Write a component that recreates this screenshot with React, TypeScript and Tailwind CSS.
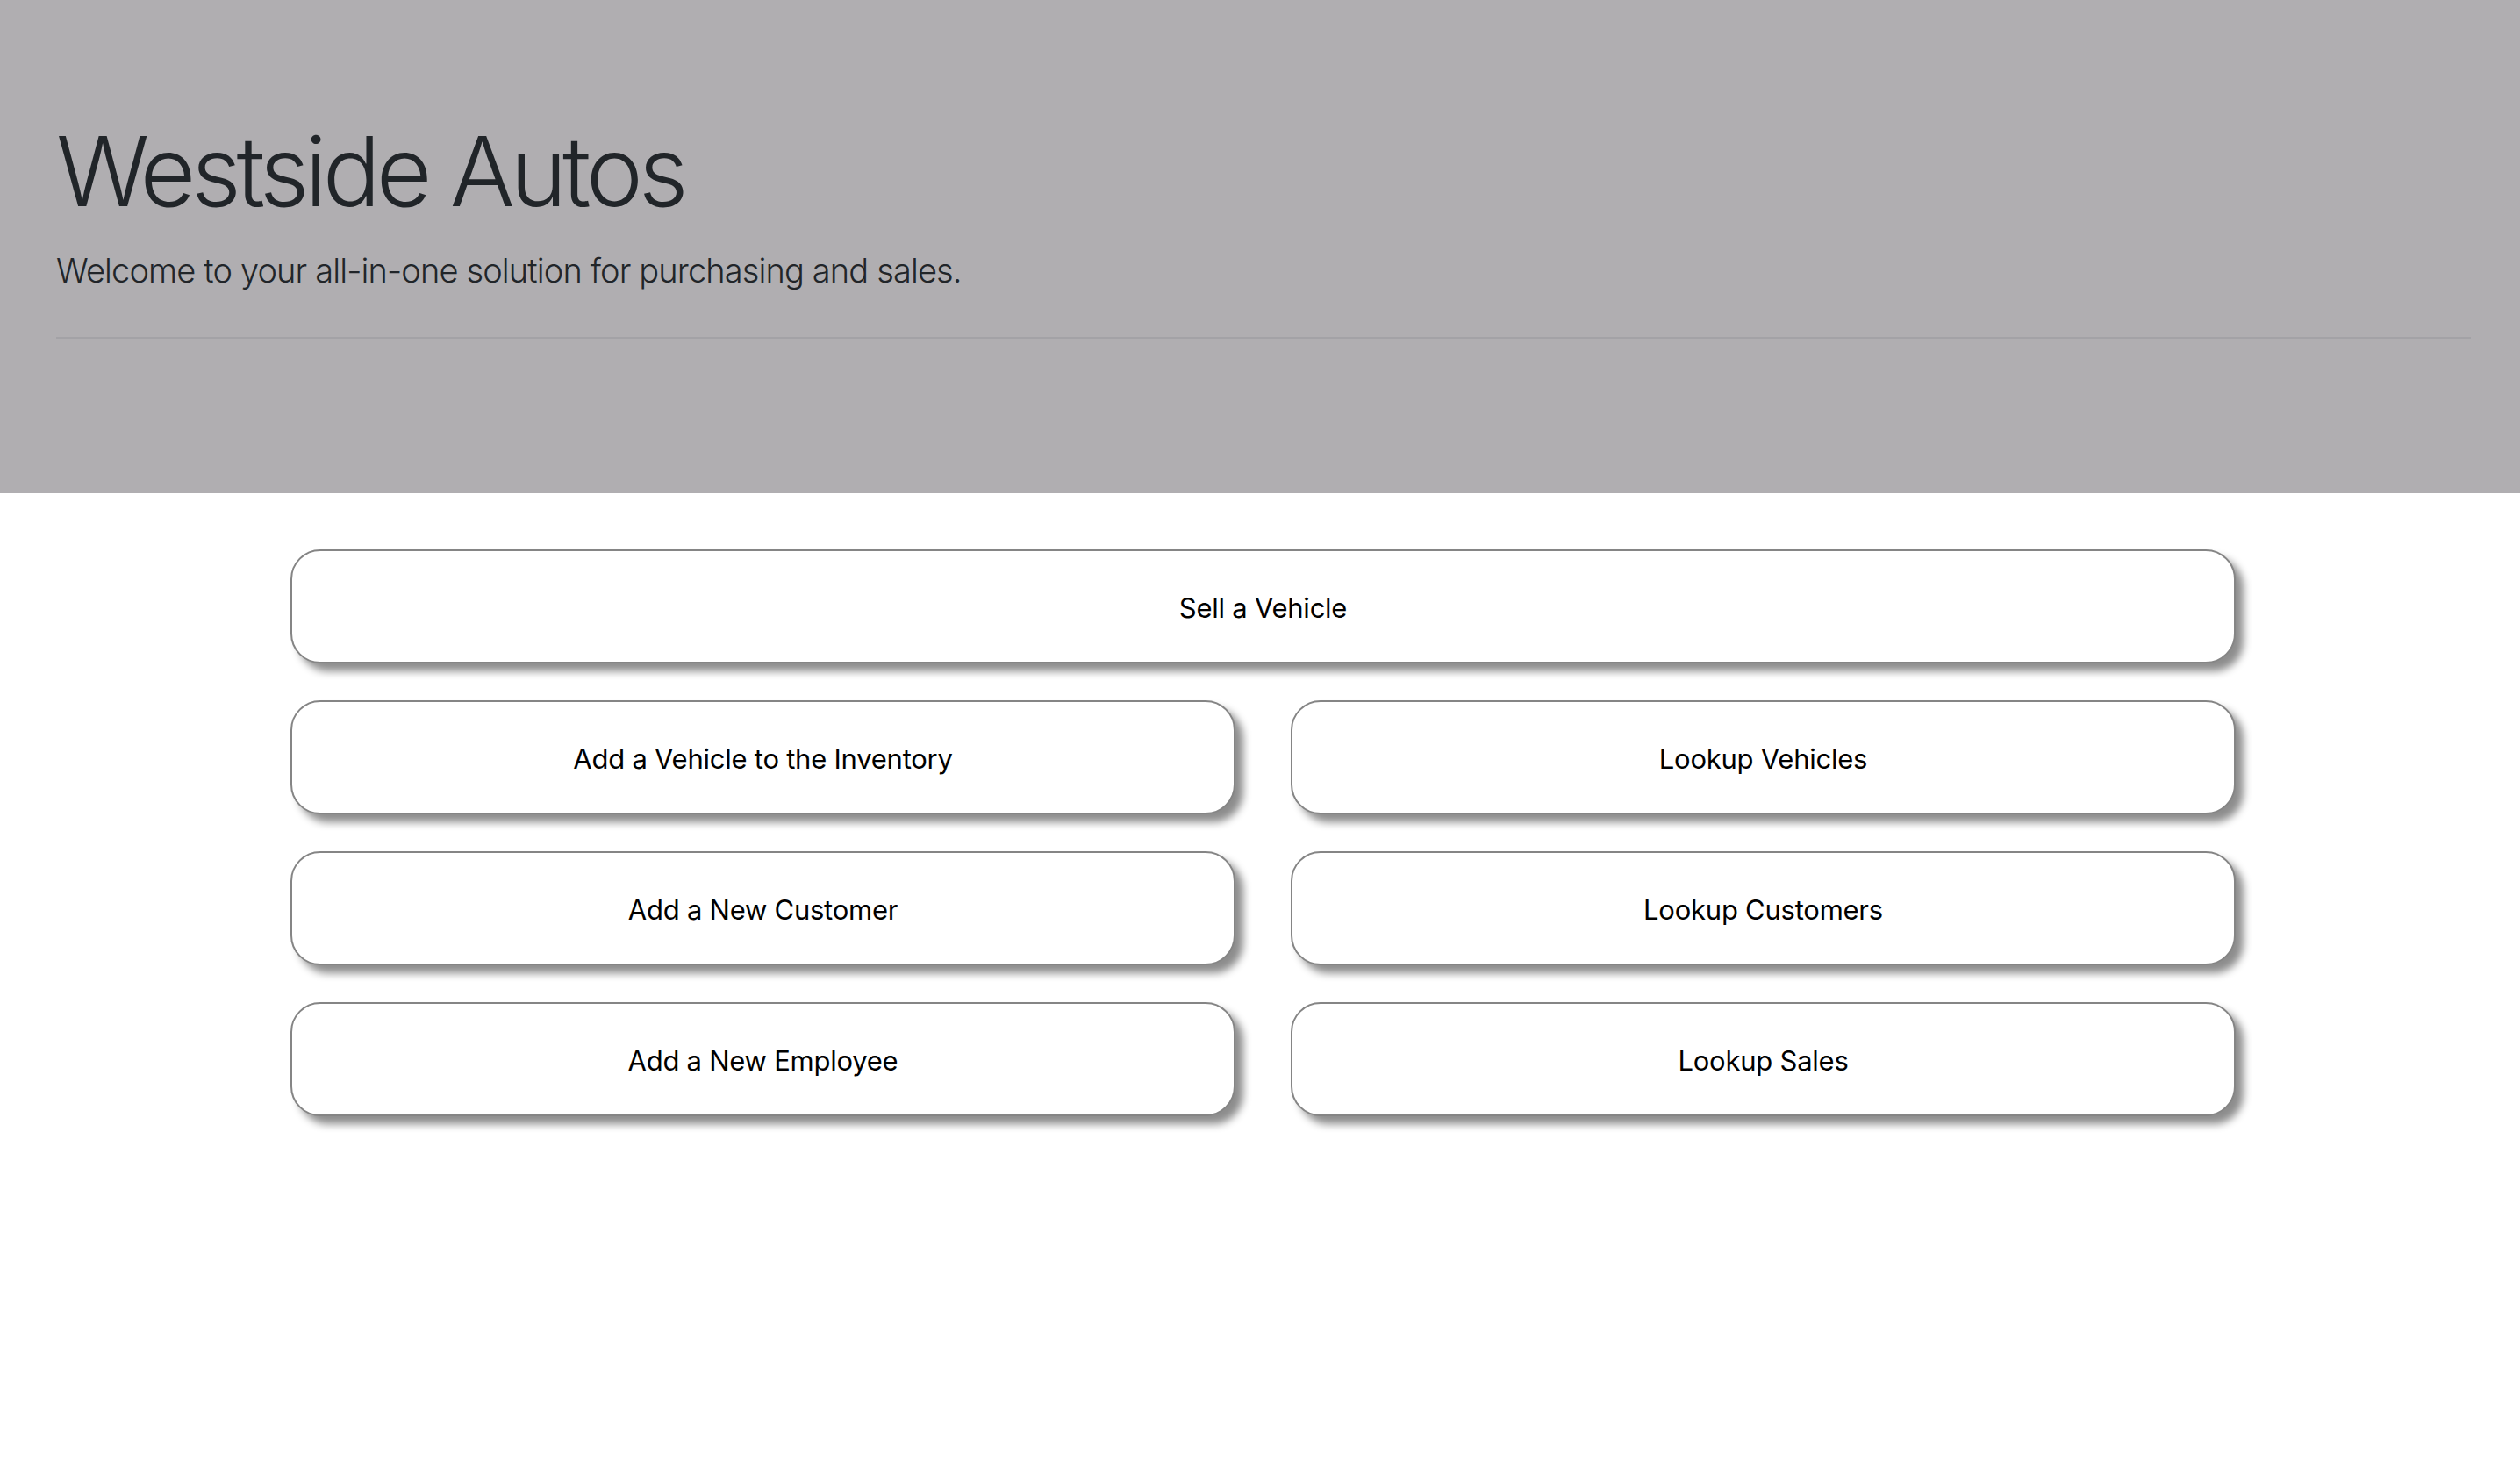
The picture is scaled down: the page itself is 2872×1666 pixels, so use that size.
import React from "react";

const btn =
  "h-[130px] pt-[4px] bg-white border-2 border-[#858585] rounded-[34px] shadow-[9px_9px_10px_rgba(0,0,0,0.45)] flex items-center justify-center text-[31px] tracking-[-0.008em] text-black font-normal";

export default function App() {
  const items = [
    "Add a Vehicle to the Inventory",
    "Lookup Vehicles",
    "Add a New Customer",
    "Lookup Customers",
    "Add a New Employee",
    "Lookup Sales",
  ];
  return (
    <div
      className="min-h-screen bg-white"
      style={{ fontFamily: "Inter, 'Noto Sans', sans-serif" }}
    >
      <header className="bg-[#b0aeb1] pt-[128px] pb-[128px] pl-[64px] pr-[56px]">
        <h1 className="text-[110px] font-light leading-[134px] tracking-[-0.048em] mb-[16px] text-[#212529]">
          Westside Autos
        </h1>
        <p className="text-[38px] font-light leading-[60px] tracking-[-0.023em] text-[#212529]">
          Welcome to your all-in-one solution for purchasing and sales.
        </p>
        <hr className="mt-[46px] mb-[48px] border-0 border-t-2 border-[#a3a2a6]" />
      </header>
      <main className="pt-[64px] pl-[331px]">
        <div className="w-[2217px] grid grid-cols-2 gap-x-[63px] gap-y-[42px]">
          <button className={btn + " col-span-2"}>Sell a Vehicle</button>
          {items.map((t) => (
            <button key={t} className={btn}>
              {t}
            </button>
          ))}
        </div>
      </main>
    </div>
  );
}
